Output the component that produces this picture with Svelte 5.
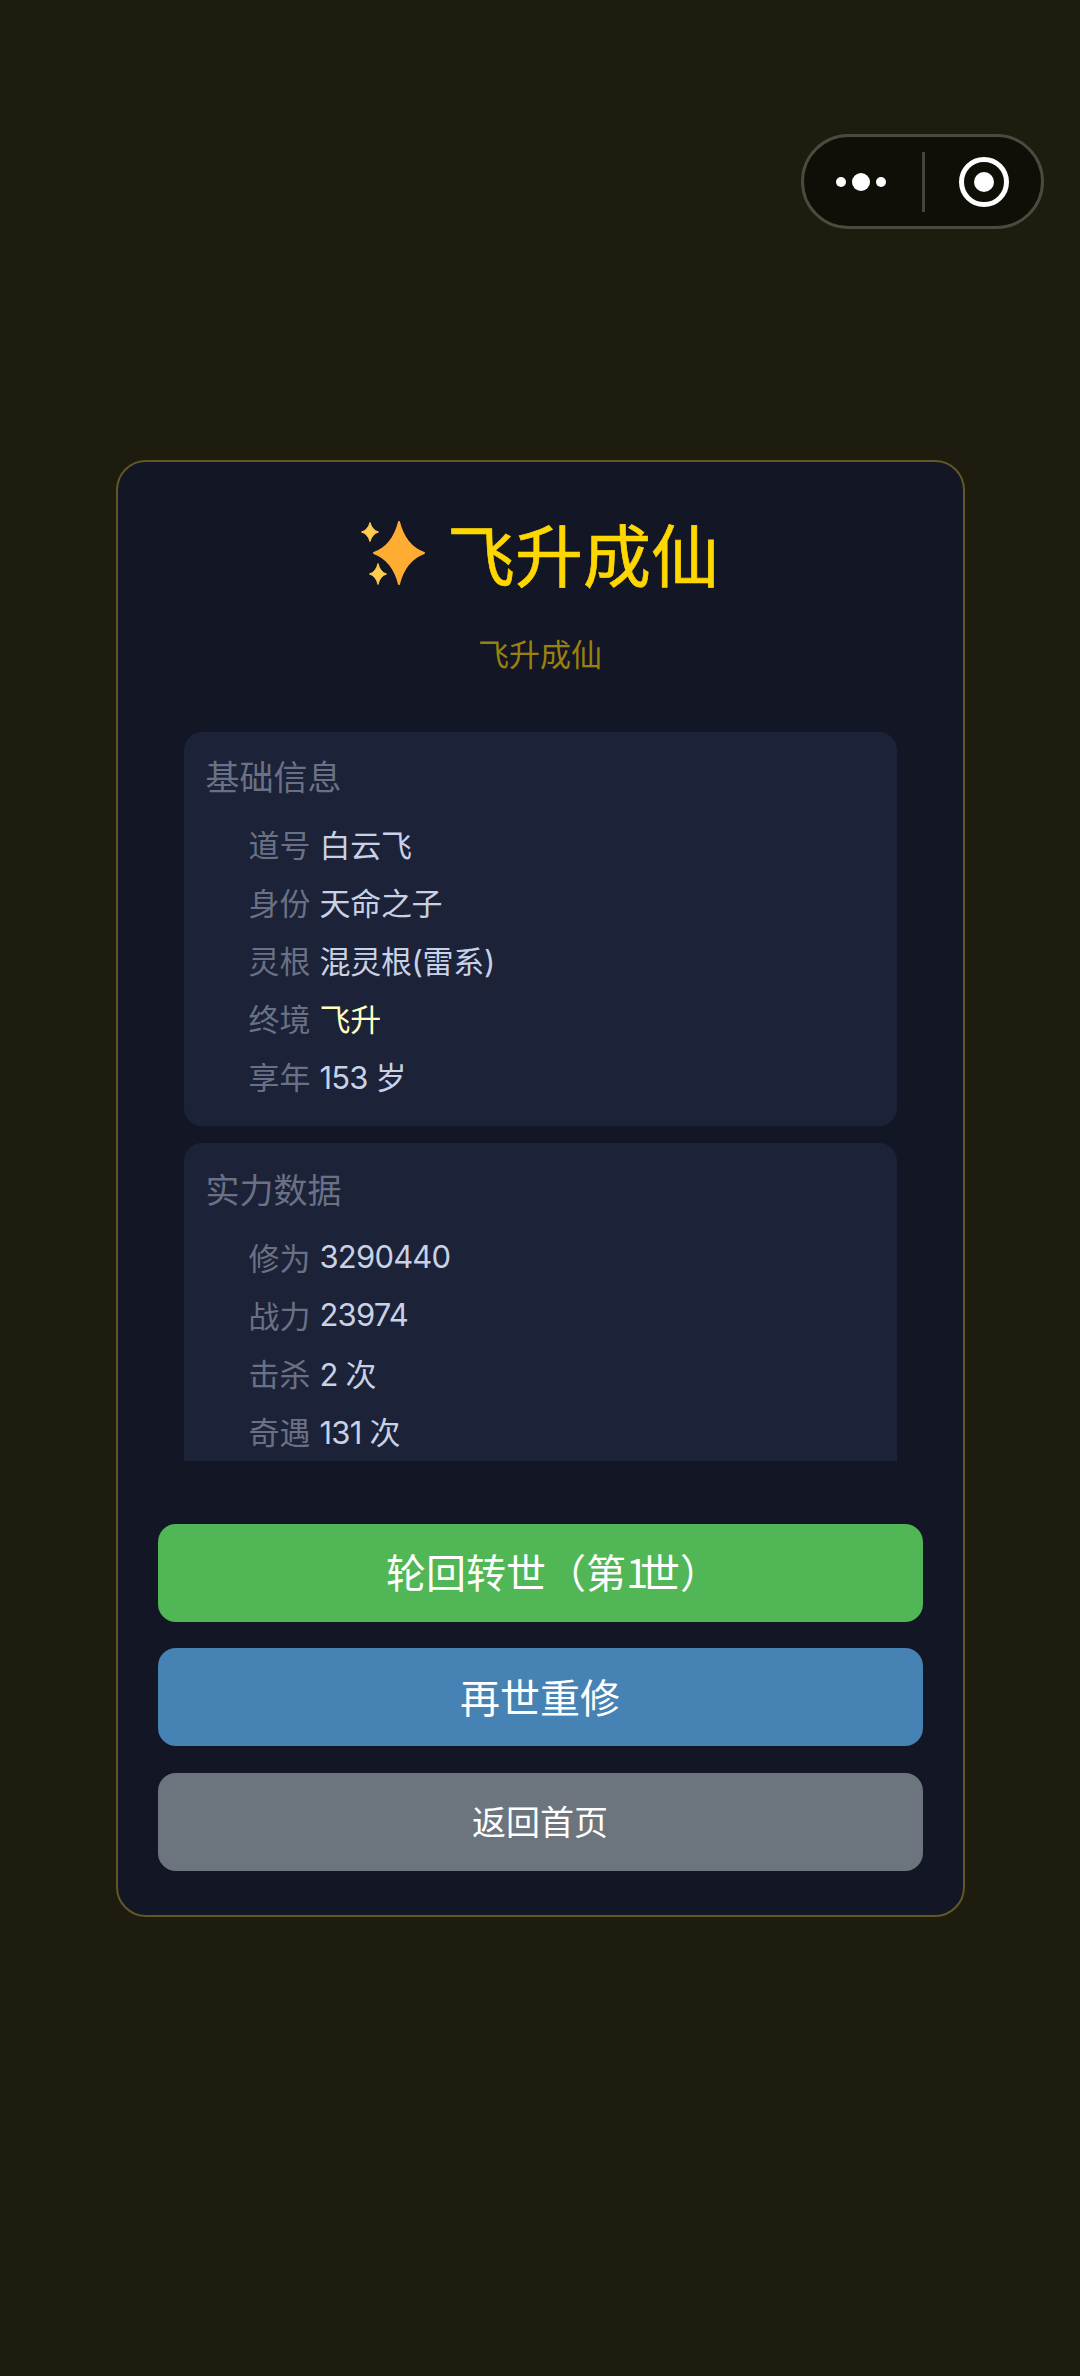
<script>
  const basic = [
    { label: '道号', value: '白云飞' },
    { label: '身份', value: '天命之子' },
    { label: '灵根', value: '混灵根(雷系)' },
    { label: '终境', value: '飞升', gold: true },
    { label: '享年', value: '153 岁', num: true }
  ];
  const power = [
    { label: '修为', value: '3290440', num: true },
    { label: '战力', value: '23974', num: true },
    { label: '击杀', value: '2 次', num: true },
    { label: '奇遇', value: '131 次', num: true }
  ];
</script>

<div class="page">
  <div class="capsule">
    <div class="dots">
      <span class="dot"></span><span class="dot big"></span><span class="dot"></span>
    </div>
    <span class="sep"></span>
    <div class="target"><span class="core"></span></div>
  </div>

  <div class="card">
    <div class="title">
      <svg class="spark" viewBox="0 0 64 64" width="64" height="64" aria-hidden="true">
        <path fill="#ffac33" stroke="#ffac33" stroke-width="2" stroke-linejoin="round" d="M38 1Q44 25 63 32Q44 39 38 63Q32 39 13 32Q32 25 38 1Z" />
        <path fill="#ffcc4d" stroke="#ffcc4d" stroke-width="1" stroke-linejoin="round" d="M9 1.5Q11 9 17.5 11Q11 13 9 20.5Q7 13 .5 11Q7 9 9 1.5Z" />
        <path fill="#ffcc4d" stroke="#ffcc4d" stroke-width="1" stroke-linejoin="round" d="M17 42.5Q19 51 25.5 53Q19 55 17 63.5Q15 55 8.5 53Q15 51 17 42.5Z" />
      </svg>
      <span>飞升成仙</span>
    </div>
    <div class="subtitle">飞升成仙</div>

    <div class="scroll">
      <section class="panel">
        <h2>基础信息</h2>
        {#each basic as row}
          <div class="row">
            <span class="label">{row.label}</span>
            <span class="value" class:gold={row.gold} class:num={row.num}>{row.value}</span>
          </div>
        {/each}
      </section>
      <section class="panel open">
        <h2>实力数据</h2>
        {#each power as row}
          <div class="row">
            <span class="label">{row.label}</span>
            <span class="value" class:num={row.num}>{row.value}</span>
          </div>
        {/each}
      </section>
    </div>

    <div class="actions">
      <button class="btn green">轮回转世（第<span class="one">1</span>世<span class="close">）</span></button>
      <button class="btn blue">再世重修</button>
      <button class="btn grey small">返回首页</button>
    </div>
  </div>
</div>

<style>
  :global(body) {
    margin: 0;
    background: #1e1c0f;
  }
  .page {
    position: relative;
    height: 2376px;
    display: flex;
    align-items: center;
    justify-content: center;
    font-family: "Noto Sans CJK SC", "Inter", sans-serif;
    background: #1e1c0f;
    overflow: hidden;
  }
  .capsule {
    position: absolute;
    left: 801px;
    top: 134px;
    width: 243px;
    height: 95px;
    box-sizing: border-box;
    border: 3px solid #4a4a3f;
    border-radius: 48px;
    background: #100f07;
    display: flex;
    align-items: center;
  }
  .dots {
    width: 118px;
    box-sizing: border-box;
    padding-left: 32px;
    display: flex;
    align-items: center;
    gap: 6px;
  }
  .dot {
    width: 10px;
    height: 10px;
    border-radius: 50%;
    background: #fff;
  }
  .dot.big {
    width: 18px;
    height: 18px;
  }
  .sep {
    width: 3px;
    height: 60px;
    background: #44443a;
  }
  .target {
    margin-left: 34px;
    width: 50px;
    height: 50px;
    box-sizing: border-box;
    border: 5px solid #fff;
    border-radius: 50%;
    display: flex;
    align-items: center;
    justify-content: center;
  }
  .core {
    width: 20px;
    height: 20px;
    border-radius: 50%;
    background: #fff;
  }
  .card {
    width: 849px;
    height: 1457px;
    box-sizing: border-box;
    border: 2px solid #635726;
    border-radius: 30px;
    background: #121625;
    padding: 0 40px;
    display: flex;
    flex-direction: column;
  }
  .title {
    margin-top: 51px;
    height: 80px;
    display: flex;
    align-items: center;
    justify-content: center;
    gap: 22px;
    color: #ffd700;
    font-size: 68px;
    font-weight: 400;
    -webkit-text-stroke: 0.7px #ffd700;
    line-height: 80px;
  }
  .spark {
    flex: none;
  }
  .subtitle {
    margin-top: 38px;
    height: 44px;
    line-height: 44px;
    text-align: center;
    font-size: 31px;
    color: #99810f;
  }
  .scroll {
    margin: 57px 0 0;
    padding: 0 26px;
    height: 729px;
    overflow: hidden;
    display: flex;
    flex-direction: column;
    gap: 17px;
  }
  .panel {
    flex: none;
    background: #1c2237;
    border-radius: 18px;
    padding: 22px 22px 21px;
  }
  .panel.open {
    padding-top: 24px;
    padding-bottom: 60px;
  }
  h2 {
    margin: 0 0 17px;
    font-size: 34px;
    line-height: 44px;
    font-weight: 400;
    color: #6a7186;
  }
  .row {
    display: flex;
    align-items: center;
    height: 58px;
    font-size: 31px;
    gap: 9px;
  }
  .label {
    width: 105px;
    text-align: right;
    color: #6a7186;
  }
  .value {
    color: #c8d1e6;
    letter-spacing: -0.3px;
    font-family: "Inter", "Noto Sans CJK SC", sans-serif;
  }
  .value.num {
    letter-spacing: -0.8px;
  }
  .value.gold {
    color: #ffffc0;
  }
  .actions {
    margin-top: 63px;
    display: flex;
    flex-direction: column;
    gap: 26.5px;
  }
  .btn {
    height: 98px;
    border: none;
    border-radius: 18px;
    color: #fff;
    font-family: inherit;
    font-size: 40px;
    padding: 0 0 3px;
  }
  .one {
    letter-spacing: -8px;
  }
  .close {
    display: inline-block;
    margin-right: -26px;
  }
  .btn.small {
    font-size: 34px;
  }
  .green {
    background: #51b655;
  }
  .blue {
    background: #4682b4;
  }
  .grey {
    background: #6c757d;
  }
</style>
